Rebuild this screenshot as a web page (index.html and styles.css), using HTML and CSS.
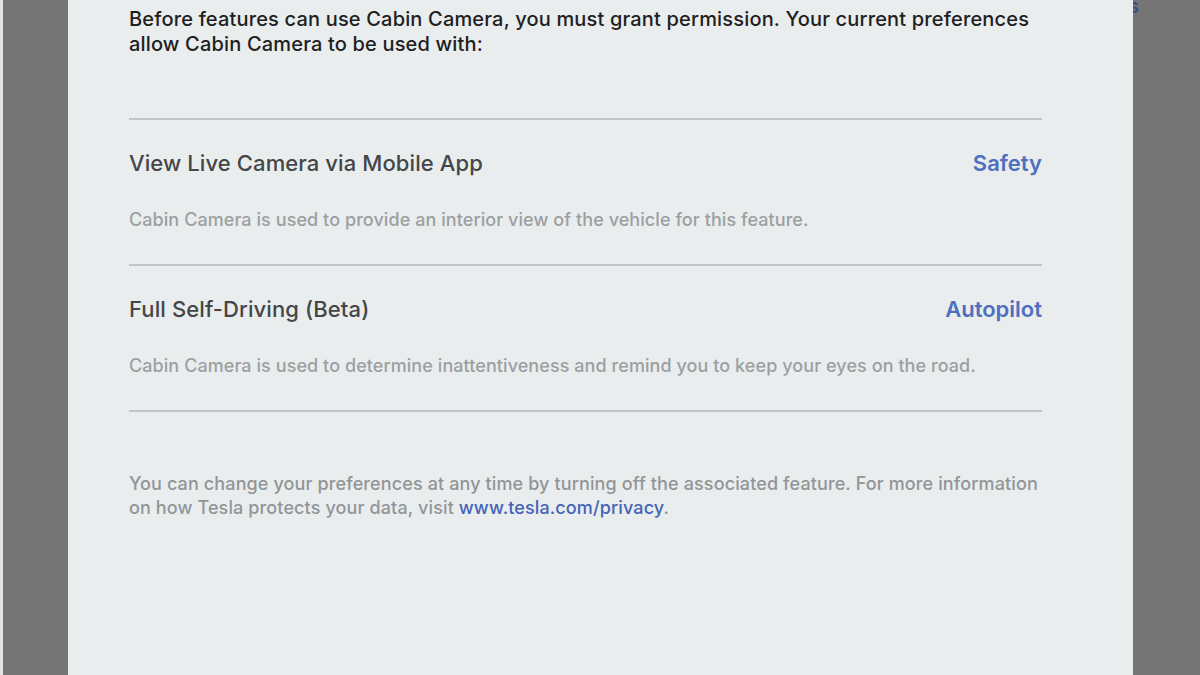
FILE: index.html
```html
<!DOCTYPE html>
<html>
<head>
<meta charset="utf-8">
<link rel="stylesheet" href="styles.css">
</head>
<body>
<div class="backdrop">
  <div class="edge"></div>
  <div class="modal">
    <p class="intro">Before features can use Cabin Camera, you must grant permission. Your current preferences allow Cabin Camera to be used with:</p>
    <div class="list">
      <div class="item">
        <div class="item-head">
          <span class="item-title">View Live Camera via Mobile App</span>
          <span class="item-tag">Safety</span>
        </div>
        <p class="item-desc">Cabin Camera is used to provide an interior view of the vehicle for this feature.</p>
      </div>
      <div class="item">
        <div class="item-head">
          <span class="item-title">Full Self-Driving (Beta)</span>
          <span class="item-tag">Autopilot</span>
        </div>
        <p class="item-desc">Cabin Camera is used to determine inattentiveness and remind you to keep your eyes on the road.</p>
      </div>
    </div>
    <p class="footer">You can change your preferences at any time by turning off the associated feature. For more information on how Tesla protects your data, visit <span class="link">www.tesla.com/privacy</span>.</p>
  </div>
  <div class="side"><span class="peek">s</span></div>
</div>
</body>
</html>
```
FILE: styles.css
```css
html, body {
  margin: 0;
  padding: 0;
  width: 1200px;
  height: 675px;
  overflow: hidden;
}
body {
  font-family: Inter, "Noto Sans", sans-serif;
  background: #747574;
}
.backdrop {
  display: flex;
  height: 675px;
}
.edge {
  width: 3px;
  background: #e4e4e4;
  flex: none;
}
.modal {
  margin-left: 65px;
  width: 1065px;
  flex: none;
  background: #e9edee;
  box-sizing: border-box;
  padding: 7px 91px 0 61px;
}
.side {
  flex: 1;
  position: relative;
  overflow: hidden;
}
.peek {
  position: absolute;
  left: -5px;
  top: -6px;
  color: #3b4f8c;
  font-size: 20px;
  font-weight: 600;
}
.intro {
  margin: 0;
  font-size: 20px;
  line-height: 25px;
  font-weight: 500;
  letter-spacing: 0.17px;
  color: #1e2021;
}
.list {
  margin-top: 61px;
  border-top: 2px solid #c3c6c7;
}
.item {
  border-bottom: 2px solid #c3c6c7;
  height: 144px;
  display: flex;
  flex-direction: column;
}
.item-head {
  display: flex;
  justify-content: space-between;
  align-items: center;
  margin-top: 29px;
  height: 28px;
}
.item-title {
  font-size: 22px;
  font-weight: 500;
  letter-spacing: 0.1px;
  color: #444648;
}
.item-tag {
  font-size: 22px;
  font-weight: 600;
  color: #4f6fc0;
}
.item-desc {
  margin: 31px 0 0 0;
  font-size: 18px;
  line-height: 24px;
  font-weight: 500;
  letter-spacing: 0.07px;
  color: #9c9fa1;
}
.footer {
  margin: 60px 0 0 0;
  font-size: 18px;
  line-height: 24px;
  font-weight: 500;
  letter-spacing: 0.12px;
  color: #929597;
}
.link {
  color: #4563b8;
}
```
